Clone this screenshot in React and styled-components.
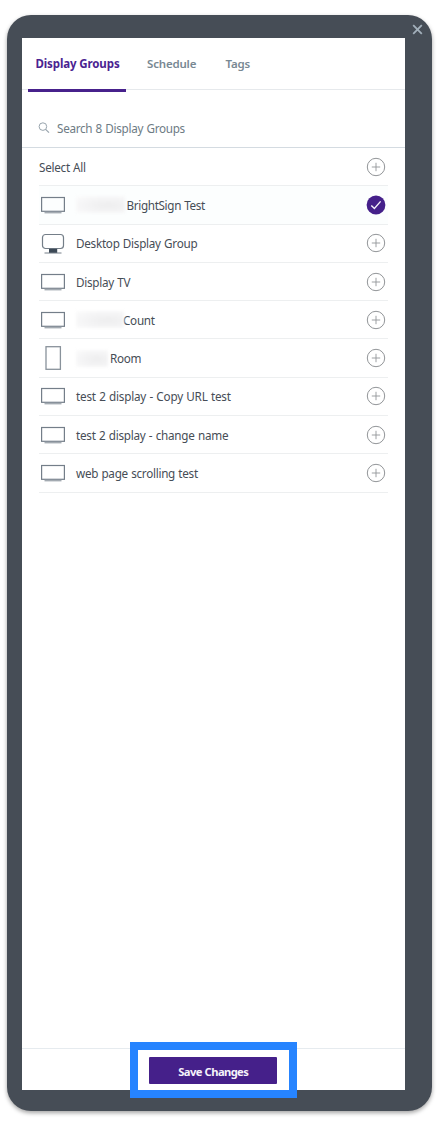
import React from "react";
import styled, { createGlobalStyle } from "styled-components";

const GlobalStyle = createGlobalStyle`
  * {
    box-sizing: border-box;
  }
  body {
    margin: 0;
    background: #fff;
    font-family: "Noto Sans", "Open Sans", sans-serif;
    font-size: 12px;
    color: #464d56;
  }
`;

const Page = styled.div`
  width: 446px;
  height: 1129px;
  padding: 15px 14.5px 18px 7px;
  overflow: hidden;
`;

const Frame = styled.div`
  position: relative;
  height: 1096px;
  padding: 23px 27px 21px 15px;
  background: #464d56;
  border-radius: 24px;
  box-shadow: 0 2px 4px rgba(0, 0, 0, 0.36);
`;

const Close = styled.button`
  all: unset;
  position: absolute;
  top: 9px;
  right: 8.5px;
  width: 11px;
  height: 11px;
  cursor: pointer;

  svg {
    display: block;
  }
`;

const Panel = styled.div`
  display: flex;
  flex-direction: column;
  height: 100%;
  background: #fff;
`;

const TabList = styled.div`
  display: flex;
  height: 52px;
  padding-left: 6px;
  border-bottom: 1px solid #e6e9ec;
`;

const Tab = styled.div`
  width: ${props => props.$width}px;
  height: 54px;
  padding-left: ${props => props.$indent}px;
  line-height: 52px;
  font-size: 11.5px;
  font-weight: ${props => (props.$active ? 700 : 600)};
  letter-spacing: ${props => (props.$active ? -0.12 : -0.18)}px;
  white-space: nowrap;
  color: ${props => (props.$active ? "#4a2391" : "#788893")};
  border-bottom: ${props => (props.$active ? "3px solid #47218c" : "none")};
`;

const Search = styled.div`
  display: flex;
  align-items: center;
  height: 58px;
  padding: 19px 0 0 16px;
  border-bottom: 1px solid #d4dbe1;
  color: #6d7b84;

  svg {
    margin: -1px 7px 0 0;
  }
`;

const Text = styled.span`
  font-size: 11.7px;
  letter-spacing: ${props => props.$spacing || -0.27}px;
  word-spacing: 0.5px;
  white-space: nowrap;
`;

const List = styled.div`
  flex: 1;
  padding: 0 16.5px 0 17px;
`;

const Row = styled.div`
  display: flex;
  align-items: center;
  height: 38.3px;
  padding-right: 2px;
  border-bottom: 1px solid #edeff0;
  background: ${props => (props.$selected ? "#fcfefe" : "transparent")};
`;

const IconSlot = styled.div`
  display: flex;
  width: 37px;
  padding-left: 2px;

  svg {
    display: block;
  }
`;

const Redacted = styled.span`
  width: ${props => props.$width}px;
  height: 17px;
  margin-right: ${props => props.$gap}px;
  background: radial-gradient(ellipse at 65% 55%, #ededee, #f5f5f6 55%, #fcfcfc);
  filter: blur(1.5px);
`;

const Toggle = styled.div`
  display: flex;
  margin-left: auto;
`;

const Footer = styled.div`
  display: flex;
  justify-content: center;
  height: 42px;
  padding-top: 8px;
  border-top: 1px solid #e6ebef;
`;

const SaveButton = styled.button`
  width: 128px;
  height: 27px;
  padding: 2px 0 0;
  border: 0;
  border-radius: 1px;
  background: #45208a;
  color: #f5f2fa;
  font: 700 11.2px/20px "Noto Sans", "Open Sans", sans-serif;
  letter-spacing: -0.6px;
  word-spacing: 0.5px;
  cursor: pointer;
`;

const Highlight = styled.div`
  position: absolute;
  left: 123px;
  top: 1027px;
  width: 166.5px;
  height: 56px;
  border: 8px solid #2684ff;
  pointer-events: none;
`;

const SearchIcon = () => (
  <svg width="12" height="12" viewBox="0 0 12 12" fill="none" stroke="#98a4ad">
    <circle cx="4.9" cy="4.6" r="3.8" />
    <path d="M7.6 7.3L11 10.7" strokeWidth="1.2" />
  </svg>
);

const LandscapeIcon = () => (
  <svg width="24" height="18" viewBox="0 0 24 18" fill="none" stroke="#747e89">
    <rect x="0.6" y="1.5" width="22.8" height="13.8" strokeWidth="1.2" />
    <path d="M3.5 16.6H20.5" strokeWidth="1.6" stroke="#a3aab1" />
  </svg>
);

const PortraitIcon = () => (
  <svg width="24" height="24" viewBox="0 0 24 24" fill="none" stroke="#89929b">
    <rect x="5" y="0.7" width="14.4" height="22.6" strokeWidth="1.3" />
  </svg>
);

const DesktopIcon = () => (
  <svg width="24" height="21" viewBox="0 0 24 21" fill="none" stroke="#747e88">
    <rect x="1.5" y="1.5" width="21" height="14" rx="3" strokeWidth="1.2" />
    <path d="M8 15.8H16.2V20H8Z" fill="#3c4956" stroke="none" />
    <path d="M3.5 20H20.5" strokeWidth="1" />
  </svg>
);

const AddIcon = () => (
  <svg width="20" height="20" viewBox="0 0 20 20" fill="none" stroke="#929598">
    <circle cx="10" cy="10" r="8.7" strokeWidth="1" />
    <path d="M5.8 10H14.2M10 5.8V14.2" strokeWidth="0.9" />
  </svg>
);

const CheckedIcon = () => (
  <svg width="20" height="20" viewBox="0 0 20 20" fill="none">
    <circle cx="10" cy="10" r="9.4" fill="#45208a" />
    <path d="M5.3 10.4L8.4 13.5L14.6 6.4" stroke="#f4f0fa" strokeWidth="1.4" />
  </svg>
);

const icons = {
  landscape: LandscapeIcon,
  portrait: PortraitIcon,
  desktop: DesktopIcon
};

const groups = [
  { name: "BrightSign Test", icon: "landscape", redacted: 49, gap: 1.5, selected: true, spacing: -0.34 },
  { name: "Desktop Display Group", icon: "desktop", spacing: -0.27 },
  { name: "Display TV", icon: "landscape" },
  { name: "Count", icon: "landscape", redacted: 48, gap: -1 },
  { name: "Room", icon: "portrait", redacted: 32, gap: 2 },
  { name: "test 2 display - Copy URL test", icon: "landscape", spacing: -0.2 },
  { name: "test 2 display - change name", icon: "landscape", spacing: -0.24 },
  { name: "web page scrolling test", icon: "landscape" }
];

const GroupRow = ({ group }) => {
  const Icon = icons[group.icon];
  return (
    <Row $selected={group.selected}>
      <IconSlot>
        <Icon />
      </IconSlot>
      {group.redacted && <Redacted $width={group.redacted} $gap={group.gap} />}
      <Text $spacing={group.spacing}>{group.name}</Text>
      <Toggle>{group.selected ? <CheckedIcon /> : <AddIcon />}</Toggle>
    </Row>
  );
};

const App = () => (
  <>
    <GlobalStyle />
    <Page>
      <Frame>
        <Close aria-label="Close">
          <svg width="11" height="11" viewBox="0 0 11 11" stroke="#a3b0bb" strokeWidth="1.8">
            <path d="M1.2 1.2L9.8 9.8M9.8 1.2L1.2 9.8" />
          </svg>
        </Close>
        <Panel>
          <TabList>
            <Tab $active $width={98} $indent={7.5}>
              Display Groups
            </Tab>
            <Tab $width={78} $indent={21}>
              Schedule
            </Tab>
            <Tab $width={60} $indent={21.5}>
              Tags
            </Tab>
          </TabList>
          <Search>
            <SearchIcon />
            <Text $spacing={-0.28}>Search 8 Display Groups</Text>
          </Search>
          <List>
            <Row>
              <Text>Select All</Text>
              <Toggle>
                <AddIcon />
              </Toggle>
            </Row>
            {groups.map(group => (
              <GroupRow key={group.name} group={group} />
            ))}
          </List>
          <Footer>
            <SaveButton>Save Changes</SaveButton>
          </Footer>
        </Panel>
        <Highlight />
      </Frame>
    </Page>
  </>
);

export default App;
